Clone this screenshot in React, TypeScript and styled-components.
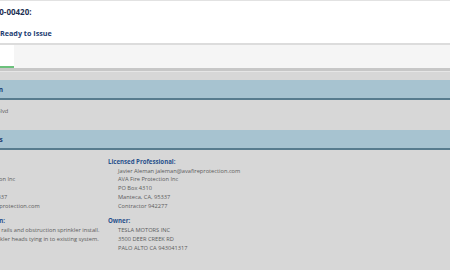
import React from "react";
import styled, { createGlobalStyle } from "styled-components";

const GlobalStyle = createGlobalStyle`
  html, body {
    margin: 0;
    padding: 0;
    background: #d7d7d7;
    overflow: hidden;
    font-family: "Open Sans", Lato, sans-serif;
  }
`;

// the page is wider than the window; its left edge sits off screen
const Page = styled.div`
  margin-left: -60px;
  width: calc(100% + 60px);
  min-height: 270px;
  background: #d7d7d7;
`;

const Header = styled.header`
  background: #ffffff;
  border-top: 1px solid #e2e2e2;
  border-bottom: 2px solid #dcdcdc;
  height: 45px;
  padding-top: 6px;
  box-sizing: border-box;
`;

const RecordTitle = styled.div`
  padding-left: 11px;
  font-size: 8px;
  line-height: 10px;
  font-weight: 700;
  color: #1d2f52;
`;

const StatusRow = styled.div`
  display: flex;
  margin-top: 11px;
  font-size: 7.2px;
  line-height: 10px;
  font-weight: 700;
`;

const StatusLabel = styled.span`
  width: 60px;
  text-align: right;
  white-space: nowrap;
  overflow: hidden;
  color: #1d2f52;
`;

const StatusValue = styled.span`
  color: #1c3d72;
`;

const TabBar = styled.nav`
  display: flex;
  height: 23px;
  background: #f5f5f5;
  border-bottom: 3px solid #c7c7c7;
  padding-left: 10px;
`;

const Tab = styled.div<{ $active?: boolean }>`
  display: flex;
  align-items: center;
  width: 64px;
  padding-left: 4px;
  box-sizing: border-box;
  font-size: 6.5px;
  color: #1c3d72;
  background: ${(p) => (p.$active ? "#ffffff" : "transparent")};
  border-bottom: 2px solid ${(p) => (p.$active ? "#6cc17c" : "transparent")};
`;

const Main = styled.main`
  border-top: 1px solid #e6e6e6;
  padding-top: 8px;
`;

const SectionBar = styled.div`
  height: 18px;
  display: flex;
  align-items: center;
  padding-left: 16px;
  background: #a7c3d0;
  border-bottom: 2px solid #587c8e;
  font-size: 6.5px;
  font-weight: 700;
  color: #1c3d72;
`;

const SectionBody = styled.div`
  height: 30px;
  padding: 7px 0 0 15px;
  box-sizing: border-box;
`;

const Line = styled.div`
  font-size: 5.7px;
  line-height: 8.8px;
  color: #5c5c5c;
  white-space: nowrap;
`;

const Columns = styled.div`
  display: grid;
  grid-template-columns: 163px 1fr;
  padding: 6.5px 0 0 5px;
`;

const Column = styled.div`
  display: flex;
  flex-direction: column;
  gap: 6px;
`;

const GroupTitle = styled.div`
  font-size: 6.1px;
  line-height: 10px;
  font-weight: 700;
  color: #27508c;
  white-space: nowrap;
`;

const GroupLines = styled.div`
  padding-left: 10px;
`;

interface InfoGroup {
  title: string;
  lines: string[];
}

const leftGroups: InfoGroup[] = [
  {
    title: "Applicant:",
    lines: [
      "Javier Aleman",
      "AVA Fire Protection Inc",
      "PO Box 4310",
      "Manteca, CA, 95337",
      "jaleman@avafireprotection.com",
    ],
  },
  {
    title: "Project Description:",
    lines: [
      "Install two new K rails and obstruction sprinkler install.",
      "Relocate all sprinkler heads tying in to existing system.",
    ],
  },
];

const rightGroups: InfoGroup[] = [
  {
    title: "Licensed Professional:",
    lines: [
      "Javier Aleman jaleman@avafireprotection.com",
      "AVA Fire Protection Inc",
      "PO Box 4310",
      "Manteca, CA, 95337",
      "Contractor 942277",
    ],
  },
  {
    title: "Owner:",
    lines: ["TESLA MOTORS INC", "3500 DEER CREEK RD", "PALO ALTO CA 943041317"],
  },
];

const renderGroups = (groups: InfoGroup[]) =>
  groups.map((g) => (
    <div key={g.title}>
      <GroupTitle>{g.title}</GroupTitle>
      <GroupLines>
        {g.lines.map((l, i) => (
          <Line key={i}>{l}</Line>
        ))}
      </GroupLines>
    </div>
  ));

const App: React.FC = () => {
  return (
    <>
      <GlobalStyle />
      <Page>
        <Header>
          <RecordTitle>Record FSP20-00420:</RecordTitle>
          <StatusRow>
            <StatusLabel>Status:&nbsp;</StatusLabel>
            <StatusValue>Ready to Issue</StatusValue>
          </StatusRow>
        </Header>
        <TabBar>
          <Tab $active>Record Info</Tab>
        </TabBar>
        <Main>
          <SectionBar>Work Location</SectionBar>
          <SectionBody>
            <Line>45500 Fremont Blvd</Line>
          </SectionBody>
          <SectionBar>Record Details</SectionBar>
          <Columns>
            <Column>{renderGroups(leftGroups)}</Column>
            <Column>{renderGroups(rightGroups)}</Column>
          </Columns>
        </Main>
      </Page>
    </>
  );
};

export default App;
